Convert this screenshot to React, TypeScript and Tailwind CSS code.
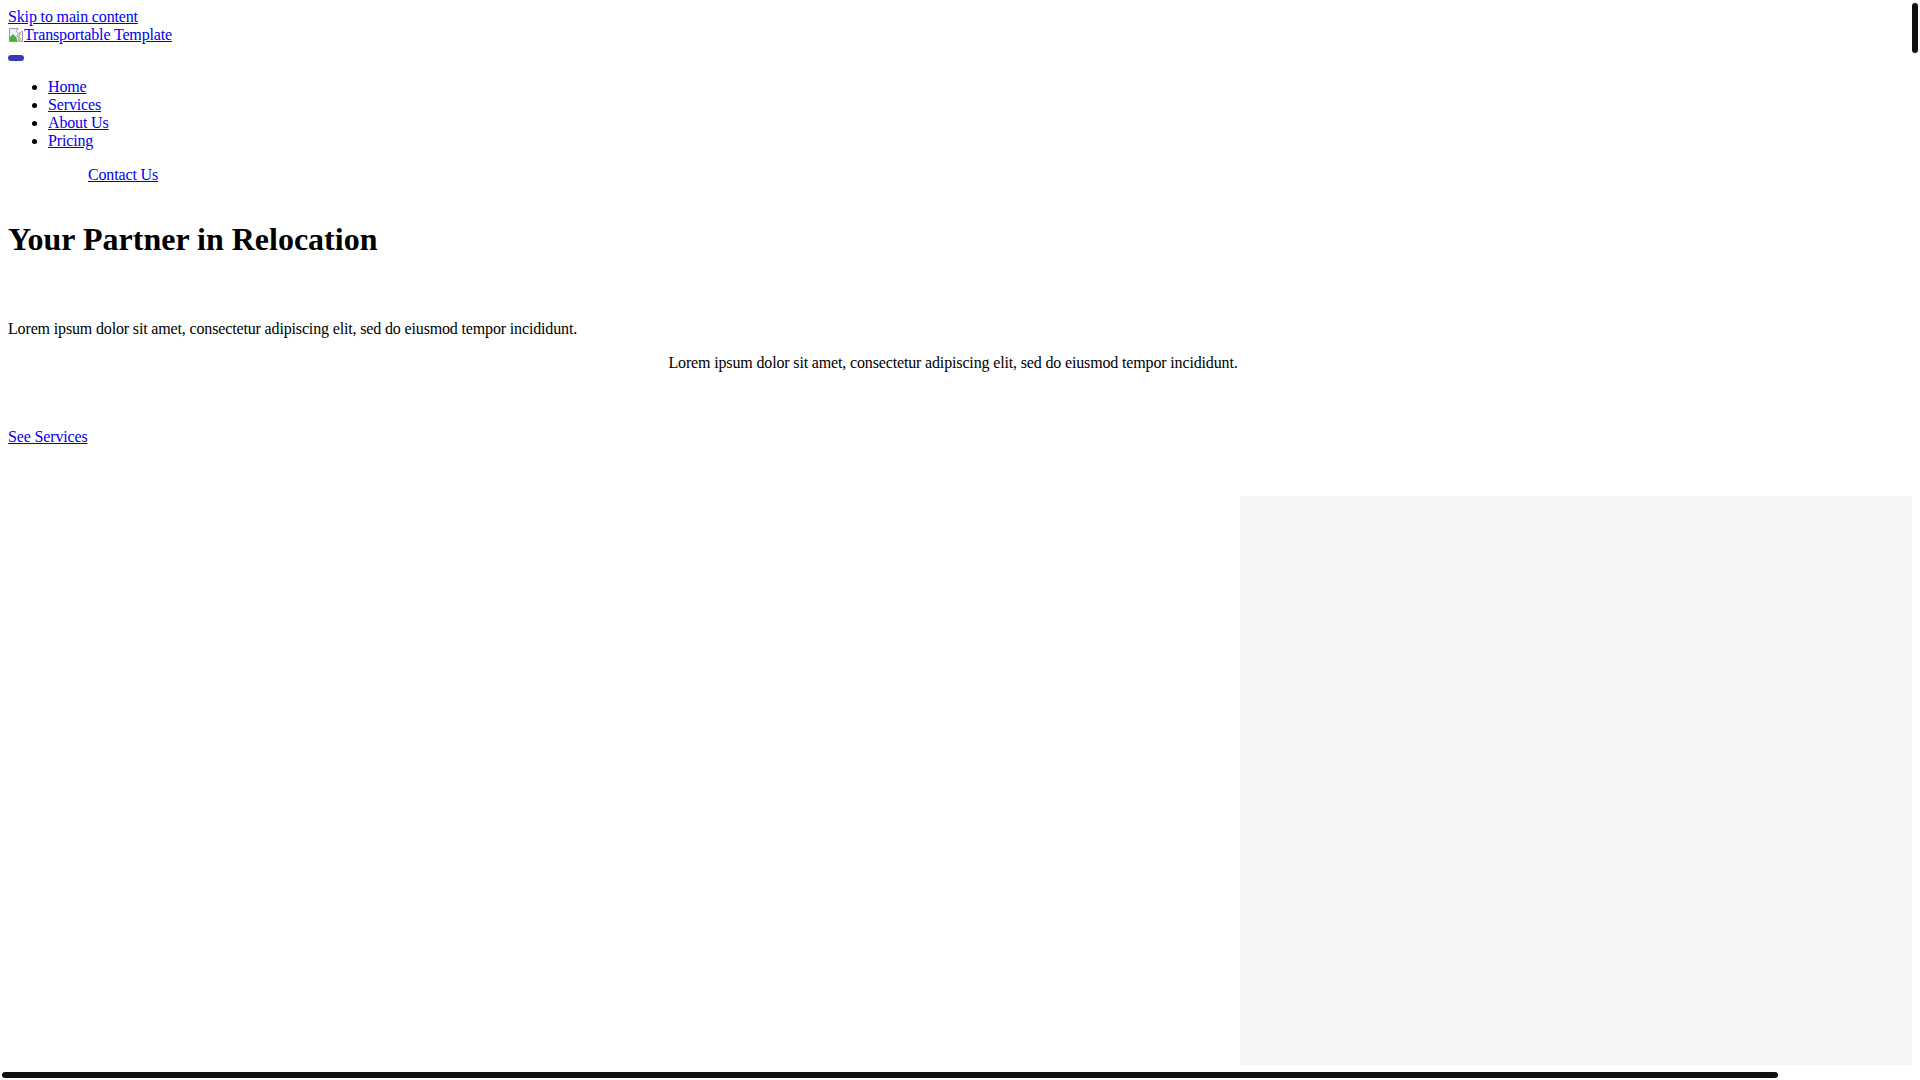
export default function App() {
  return (
    <div className="relative h-[1080px] w-[1920px] overflow-hidden bg-white p-2 font-['Liberation_Serif','Times_New_Roman',serif] text-[16px] leading-[18px] tracking-[-0.15px] text-black">
      <div className="w-[1904px]">
        <div>
          <a href="#main" className="text-[#0000ee] underline">
            Skip to main content
          </a>
        </div>
        <div>
          <a href="#" className="text-[#0000ee] underline">
            <svg
              width="16"
              height="16"
              viewBox="0 0 16 16"
              className="inline-block align-[-3px]"
            >
              <path d="M1.5 1.5h8.5l-1.5 3 2 2-1.5 2.5 2 2-1 3.5h-8.5z" fill="#eaf3fb" stroke="#9a9a9a" />
              <path d="M1.5 14.5v-4l3.5-3.5 3.5 3.5 1 4z" fill="#4caf3a" />
              <path d="M11.5 5.5l3-1v10h-3l1-3-2-2 1.5-2.5z" fill="#f2f2f2" stroke="#9a9a9a" />
            </svg>
            Transportable Template
          </a>
        </div>
        <div className="mt-[11px] h-[6px] w-4 rounded-full bg-[#3a3ab6]" />
        <ul className="mt-[17px] list-disc pl-10">
          <li>
            <a href="#" className="text-[#0000ee] underline">Home</a>
          </li>
          <li>
            <a href="#" className="text-[#0000ee] underline">Services</a>
          </li>
          <li>
            <a href="#" className="text-[#0000ee] underline">About Us</a>
          </li>
          <li>
            <a href="#" className="text-[#0000ee] underline">Pricing</a>
          </li>
        </ul>
        <div className="mt-4 pl-20">
          <a href="#" className="text-[#0000ee] underline">Contact Us</a>
        </div>
        <main id="main">
          <h1 className="mt-[37px] text-[32px] font-bold leading-[1.15] tracking-normal">
            Your Partner in Relocation
          </h1>
          <p className="mt-[62px]">
            Lorem ipsum dolor sit amet, consectetur adipiscing elit, sed do eiusmod tempor incididunt.
          </p>
          <p className="mt-4 pr-[14px] text-center">
            Lorem ipsum dolor sit amet, consectetur adipiscing elit, sed do eiusmod tempor incididunt.
          </p>
          <div className="mt-[56px]">
            <a href="#" className="text-[#0000ee] underline">See Services</a>
          </div>
          <div className="mt-[50px] flex">
            <div className="flex-1" />
            <div className="h-[569px] w-[672px] bg-[#f5f5f5]" />
          </div>
        </main>
      </div>
      <div className="absolute left-[1912px] top-[3px] h-[50px] w-[6px] rounded-full bg-[#111111]" />
      <div className="absolute left-[2px] top-[1072px] h-[6px] w-[1776px] rounded-full bg-[#111111]" />
    </div>
  );
}
